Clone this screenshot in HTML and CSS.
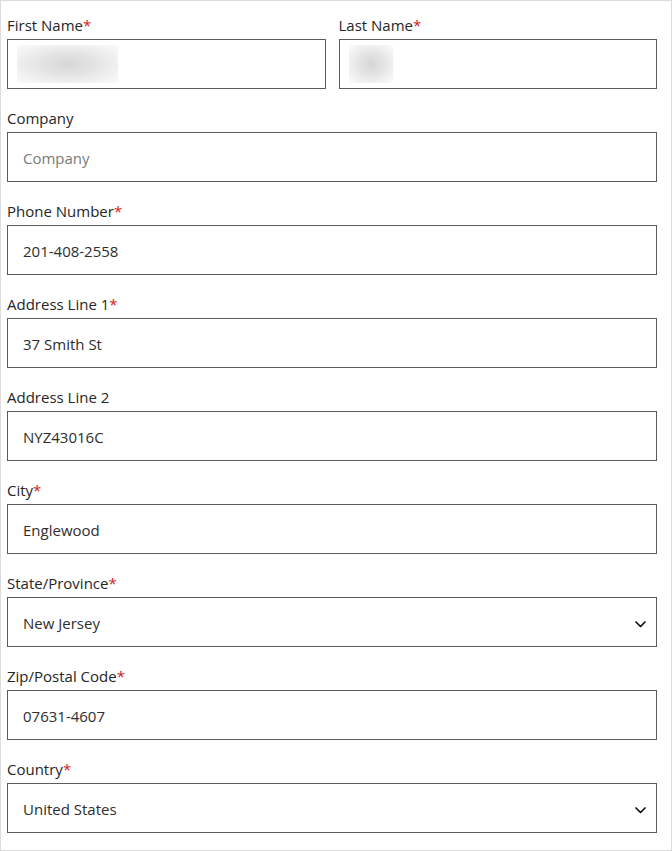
FILE: index.html
```html
<!DOCTYPE html>
<html>
<head>
<meta charset="utf-8">
<link rel="stylesheet" href="styles.css">
</head>
<body>
<form class="form">
  <div class="row two">
    <div class="field">
      <label class="label">First Name<span class="req">*</span></label>
      <div class="input blurred"><span class="blob blob-first"></span></div>
    </div>
    <div class="field">
      <label class="label">Last Name<span class="req">*</span></label>
      <div class="input blurred"><span class="blob blob-last"></span></div>
    </div>
  </div>
  <div class="field">
    <label class="label">Company</label>
    <input class="input" type="text" placeholder="Company">
  </div>
  <div class="field">
    <label class="label">Phone Number<span class="req">*</span></label>
    <input class="input" type="text" value="201-408-2558">
  </div>
  <div class="field">
    <label class="label">Address Line 1<span class="req">*</span></label>
    <input class="input" type="text" value="37 Smith St">
  </div>
  <div class="field">
    <label class="label">Address Line 2</label>
    <input class="input" type="text" value="NYZ43016C">
  </div>
  <div class="field">
    <label class="label">City<span class="req">*</span></label>
    <input class="input" type="text" value="Englewood">
  </div>
  <div class="field">
    <label class="label">State/Province<span class="req">*</span></label>
    <div class="select-wrap">
      <select class="input select"><option>New Jersey</option></select>
      <svg class="chev" width="11" height="7" viewBox="0 0 11 7"><path d="M1 1 L5.5 5.5 L10 1" fill="none" stroke="#111" stroke-width="1.7" stroke-linecap="round" stroke-linejoin="round"/></svg>
    </div>
  </div>
  <div class="field">
    <label class="label">Zip/Postal Code<span class="req">*</span></label>
    <input class="input" type="text" value="07631-4607">
  </div>
  <div class="field">
    <label class="label">Country<span class="req">*</span></label>
    <div class="select-wrap">
      <select class="input select"><option>United States</option></select>
      <svg class="chev" width="11" height="7" viewBox="0 0 11 7"><path d="M1 1 L5.5 5.5 L10 1" fill="none" stroke="#111" stroke-width="1.7" stroke-linecap="round" stroke-linejoin="round"/></svg>
    </div>
  </div>
</form>
</body>
</html>
```
FILE: styles.css
```css
html, body {
  margin: 0;
  padding: 0;
  background: #fff;
}
body {
  font-family: "Open Sans", "Noto Sans", "Liberation Sans", sans-serif;
  color: #222;
}
.form {
  box-sizing: border-box;
  width: 672px;
  height: 851px;
  border: 1px solid #dcdcdc;
  padding: 14px 14px 0 6px;
  display: flex;
  flex-direction: column;
  gap: 19px;
}
.row.two {
  display: grid;
  grid-template-columns: 1fr 1fr;
  gap: 13px;
}
.field {
  display: flex;
  flex-direction: column;
  gap: 4px;
}
.label {
  font-size: 15px;
  line-height: 20px;
  height: 20px;
  color: #262626;
  white-space: nowrap;
}
.req {
  color: #d42020;
}
.input {
  box-sizing: border-box;
  width: 100%;
  height: 50px;
  border: 1px solid #5c5c5c;
  border-radius: 0;
  background: #fff;
  padding: 2px 15px 0;
  margin: 0;
  font-family: inherit;
  font-size: 15px;
  color: #2e2e2e;
  outline: none;
}
.input::placeholder {
  color: #7a7a7a;
}
.blurred {
  display: flex;
  align-items: center;
  padding: 0 9px;
}
.blob {
  display: block;
  height: 38px;
  background: radial-gradient(ellipse at center, #d6d6d6 0%, #e4e4e4 40%, #f6f6f6 85%, #fbfbfb 100%);
}
.blob-first { width: 101px; }
.blob-last { width: 44px; }
.select-wrap {
  position: relative;
}
.select {
  appearance: none;
  -webkit-appearance: none;
}
.chev {
  position: absolute;
  right: 11px;
  top: 24px;
  pointer-events: none;
}
```
